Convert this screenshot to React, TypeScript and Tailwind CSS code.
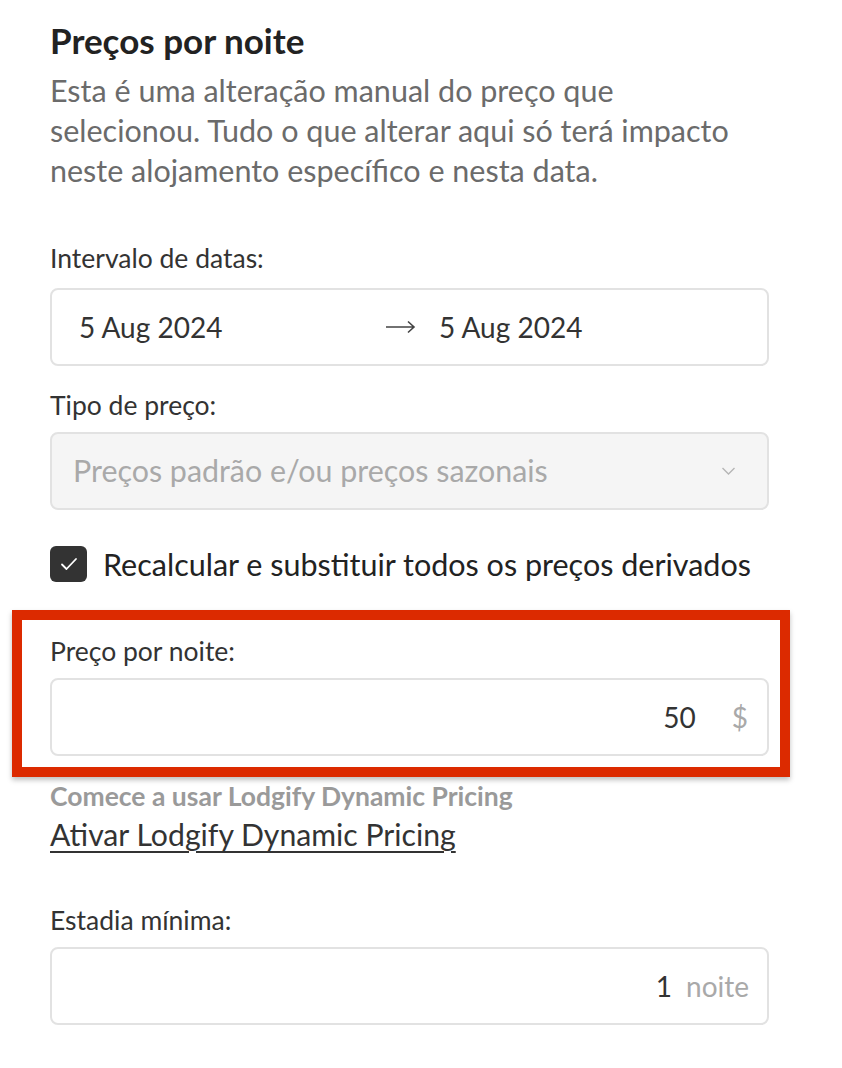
import React from 'react';

const Label = ({ children, gap = 'mb-[11px]' }: { children: React.ReactNode; gap?: string }) => (
  <div className={`text-[26.5px] leading-[32px] text-[#333] ${gap}`}>{children}</div>
);

export default function App() {
  return (
    <div className="min-h-screen bg-white font-['Lato',sans-serif] text-[#333]">
      <div className="w-[719px] ml-[50px] pt-[20px] pb-10">
        <h2 className="text-[35px] font-bold leading-[40px] text-[#222]">Preços por noite</h2>
        <p className="mt-[10px] text-[30.5px] leading-[40px] text-[#6b6b6b]">
          Esta é uma alteração manual do preço que selecionou. Tudo o que alterar aqui só terá impacto neste alojamento específico e nesta data.
        </p>

        {/* Date range */}
        <div className="mt-[52px]">
          <Label gap="mb-[14px]">Intervalo de datas:</Label>
          <div className="h-[78px] rounded-[8px] border-2 border-[#e2e2e2] flex items-center pl-[27px] text-[28px] text-[#333]">
            <span className="w-[306px]">5 Aug 2024</span>
            <span className="w-[54px] text-[#444]">
              <svg width="31" height="14" viewBox="0 0 31 14" fill="none" stroke="#444" strokeWidth="1.6">
                <path d="M1 7h28M23 1.5 29 7l-6 5.5" />
              </svg>
            </span>
            <span>5 Aug 2024</span>
          </div>
        </div>

        {/* Price type */}
        <div className="mt-[23px]">
          <Label>Tipo de preço:</Label>
          <div className="h-[78px] rounded-[8px] border-2 border-[#e2e2e2] bg-[#f5f5f5] flex items-center justify-between pl-[21px] pr-[31px] text-[30.4px] text-[#a9a9a9]">
            <span>Preços padrão e/ou preços sazonais</span>
            <svg width="15" height="10" viewBox="0 0 15 10" fill="none" stroke="#b5b5b5" strokeWidth="1.4">
              <path d="M1.5 2 7.5 8l6-6" />
            </svg>
          </div>
        </div>

        {/* Checkbox */}
        <label className="mt-[36px] flex items-center gap-[16px]">
          <span className="w-[37px] h-[36px] rounded-[6px] bg-[#333] flex items-center justify-center">
            <svg width="18" height="14" viewBox="0 0 18 14" fill="none" stroke="#fff" strokeWidth="1.8" strokeLinecap="round" strokeLinejoin="round">
              <path d="M2 7.5 6.5 12 16 2" />
            </svg>
          </span>
          <span className="text-[30.5px] leading-[36px] text-[#222]">Recalcular e substituir todos os preços derivados</span>
        </label>

        {/* Highlighted price field */}
        <div className="mt-[28px] -ml-[38px] -mr-[21px] border-[10px] border-[#dc2a00] pl-[28px] pr-[11px] pt-[15px] pb-[11px] shadow-[0_3px_5px_rgba(0,0,0,0.25)]">
          <Label>Preço por noite:</Label>
          <div className="h-[78px] rounded-[8px] border-2 border-[#e2e2e2] flex items-center justify-end pr-[19px] text-[28px]">
            <span className="text-[#333]">50</span>
            <span className="ml-[36px] text-[#a9a9a9]">$</span>
          </div>
        </div>

        <div className="mt-[4px] text-[26.5px] leading-[30px] font-bold text-[#9a9a9a]">Comece a usar Lodgify Dynamic Pricing</div>
        <a href="#" className="mt-[5px] block text-[30.2px] leading-[36px] text-[#333] underline underline-offset-[5px] decoration-[1.5px]">
          Ativar Lodgify Dynamic Pricing
        </a>

        {/* Minimum stay */}
        <div className="mt-[52px]">
          <Label>Estadia mínima:</Label>
          <div className="h-[78px] rounded-[8px] border-2 border-[#e2e2e2] flex items-center justify-end pr-[18px] text-[28px]">
            <span className="text-[#333]">1</span>
            <span className="ml-[14px] text-[#a9a9a9]">noite</span>
          </div>
        </div>
      </div>
    </div>
  );
}
